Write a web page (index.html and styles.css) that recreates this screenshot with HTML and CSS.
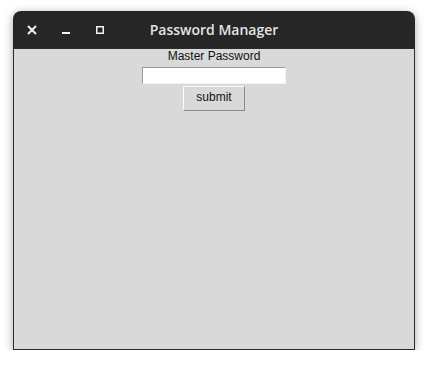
FILE: index.html
```html
<!DOCTYPE html>
<html lang="en">
<head>
    <meta charset="UTF-8">
    <title>Password Manager</title>
    <link rel="stylesheet" href="styles.css">
</head>
<body>
    <div class="window">
        <div class="titlebar">
            <div class="controls">
                <span class="ctl">
                    <svg width="10" height="10" viewBox="0 0 10 10"><path d="M1 1 L9 9 M9 1 L1 9" stroke="#f2f2f2" stroke-width="2"/></svg>
                </span>
                <span class="ctl">
                    <svg width="10" height="10" viewBox="0 0 10 10"><rect x="1" y="7" width="8" height="2" fill="#f2f2f2"/></svg>
                </span>
                <span class="ctl">
                    <svg width="10" height="10" viewBox="0 0 10 10"><rect x="1.75" y="1.75" width="6.5" height="6.5" fill="none" stroke="#f2f2f2" stroke-width="1.5"/></svg>
                </span>
            </div>
            <div class="title">Password Manager</div>
        </div>
        <div class="content">
            <label class="label" for="master">Master Password</label>
            <input type="password" id="master" class="entry">
            <button class="submit">submit</button>
        </div>
    </div>
</body>
</html>
```

FILE: styles.css
```css
* {
    margin: 0;
    padding: 0;
    box-sizing: border-box;
}

body {
    background: #fff;
    font-family: 'Liberation Sans', Arial, sans-serif;
    padding: 11px 0 0 13px;
}

.window {
    width: 402px;
    height: 339px;
    display: flex;
    flex-direction: column;
    border-radius: 8px 8px 0 0;
    box-shadow: 0 2px 10px rgba(0, 0, 0, 0.35);
}

.titlebar {
    height: 37px;
    background: #262626;
    border-radius: 8px 8px 0 0;
    position: relative;
    display: flex;
    align-items: center;
}

.controls {
    display: flex;
    padding-left: 9px;
    gap: 14px;
}

.ctl {
    width: 20px;
    height: 20px;
    display: flex;
    align-items: center;
    justify-content: center;
}

.ctl svg {
    display: block;
}

.title {
    position: absolute;
    left: 0;
    right: 0;
    top: 9px;
    text-align: center;
    color: #e4e4e4;
    font-family: 'Open Sans', 'Noto Sans', sans-serif;
    font-size: 14px;
    font-weight: 600;
    line-height: 20px;
    pointer-events: none;
}

.content {
    flex: 1;
    background: #d9d9d9;
    border: 1px solid #2b2b2b;
    display: flex;
    flex-direction: column;
    align-items: center;
}

.label {
    font-size: 12px;
    line-height: 15px;
    color: #111;
}

.entry {
    width: 144px;
    height: 17px;
    margin-top: 3px;
    background: #fff;
    border: 1px solid;
    border-color: #999 #f4f4f4 #f4f4f4 #999;
    outline: none;
}

.submit {
    width: 62px;
    height: 25px;
    margin-top: 2px;
    padding-bottom: 3px;
    background: #d9d9d9;
    border: 1px solid;
    border-color: #fafafa #8a8a8a #8a8a8a #fafafa;
    font-family: 'Liberation Sans', Arial, sans-serif;
    font-size: 12px;
    color: #111;
}
```
